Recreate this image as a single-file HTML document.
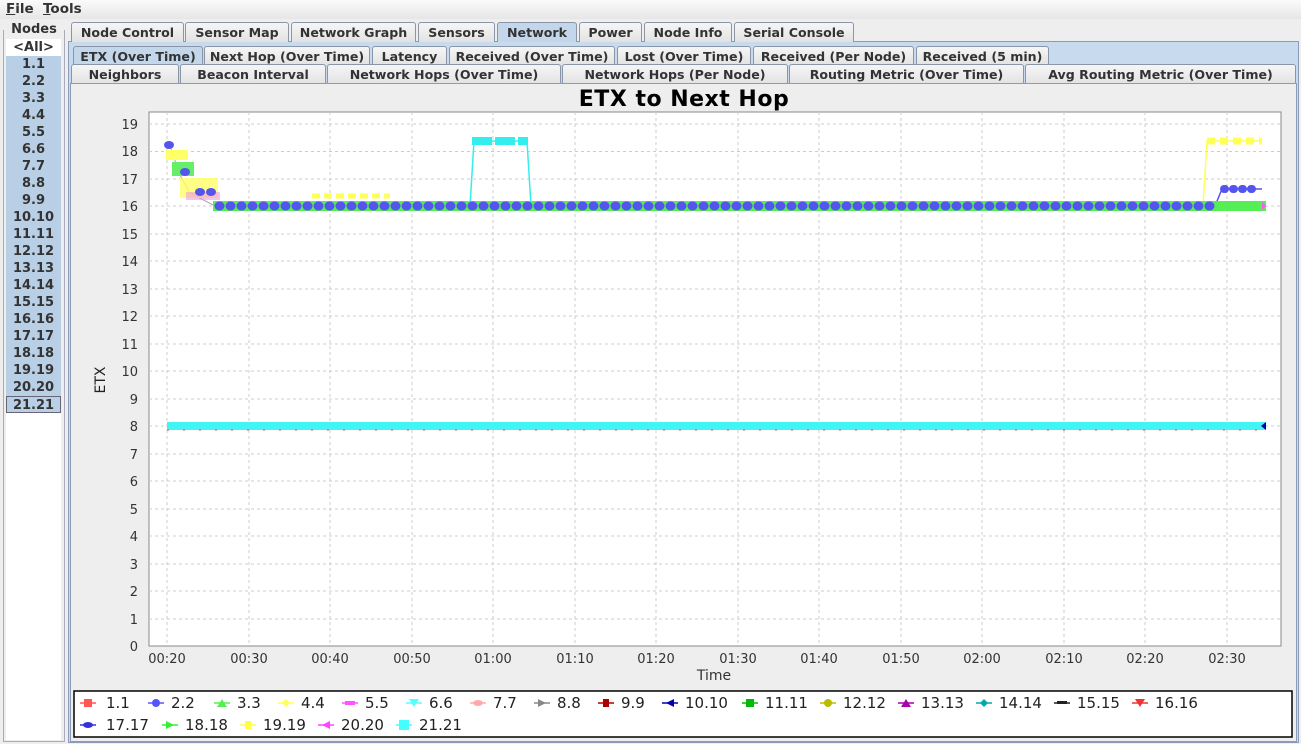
<!DOCTYPE html>
<html><head><meta charset="utf-8"><style>
*{margin:0;padding:0;box-sizing:border-box}
body{width:1301px;height:744px;background:#eeeeee;font-family:"DejaVu Sans","Liberation Sans",sans-serif;font-size:13px;color:#222;position:relative;overflow:hidden}
.abs{position:absolute}
.menu{left:0;top:0;width:1301px;height:19px;background:linear-gradient(#fbfbfb,#e6e6e6)}
.menu span{position:absolute;top:1px;font-size:13.5px;font-weight:bold;color:#333}
.tab{position:absolute;height:20px;border:1px solid #8a96a8;border-bottom:none;background:linear-gradient(#f6f6f6,#e2e2e2);text-align:center;font-weight:bold;font-size:12.6px;line-height:19px;color:#333;border-radius:3px 3px 0 0;white-space:nowrap;overflow:hidden}
.sel{background:#c3d6ea}
.nodes div{height:17px;line-height:17px;text-align:center;font-weight:bold;color:#333}
</style></head><body>
<div class="abs menu"><span style="left:6px"><u>F</u>ile</span><span style="left:43px"><u>T</u>ools</span></div>
<div class="abs" style="left:3px;top:30px;width:62px;height:712px;border:1px solid #aab;border-top:none"></div>
<div class="abs" style="left:6px;top:22px;width:56px;text-align:center;font-weight:bold;background:#eee;color:#333">Nodes</div>
<div class="abs nodes" style="left:6px;top:39px;width:55px;background:#fff;height:701px">
<div>&lt;All&gt;</div>
<div style="background:#b8cfe6">1.1</div><div style="background:#b8cfe6">2.2</div><div style="background:#b8cfe6">3.3</div><div style="background:#b8cfe6">4.4</div><div style="background:#b8cfe6">5.5</div><div style="background:#b8cfe6">6.6</div><div style="background:#b8cfe6">7.7</div><div style="background:#b8cfe6">8.8</div><div style="background:#b8cfe6">9.9</div><div style="background:#b8cfe6">10.10</div><div style="background:#b8cfe6">11.11</div><div style="background:#b8cfe6">12.12</div><div style="background:#b8cfe6">13.13</div><div style="background:#b8cfe6">14.14</div><div style="background:#b8cfe6">15.15</div><div style="background:#b8cfe6">16.16</div><div style="background:#b8cfe6">17.17</div><div style="background:#b8cfe6">18.18</div><div style="background:#b8cfe6">19.19</div><div style="background:#b8cfe6">20.20</div><div style="background:#b8cfe6;border:1px solid #667">21.21</div>
</div>
<div class="abs" style="left:68px;top:41px;width:1231px;height:702px;background:#c8dbee;border:1px solid #8a9cb8"></div>
<div class="tab" style="left:71px;top:22px;width:113px">Node Control</div>
<div class="tab" style="left:185px;top:22px;width:104px">Sensor Map</div>
<div class="tab" style="left:291px;top:22px;width:125px">Network Graph</div>
<div class="tab" style="left:418px;top:22px;width:77px">Sensors</div>
<div class="tab sel" style="left:497px;top:22px;width:80px">Network</div>
<div class="tab" style="left:579px;top:22px;width:63px">Power</div>
<div class="tab" style="left:644px;top:22px;width:88px">Node Info</div>
<div class="tab" style="left:734px;top:22px;width:120px">Serial Console</div>
<div class="tab sel" style="left:73px;top:46px;width:130px;height:19px">ETX (Over Time)</div>
<div class="tab" style="left:204px;top:46px;width:166px;height:19px">Next Hop (Over Time)</div>
<div class="tab" style="left:372px;top:46px;width:75px;height:19px">Latency</div>
<div class="tab" style="left:449px;top:46px;width:166px;height:19px">Received (Over Time)</div>
<div class="tab" style="left:617px;top:46px;width:134px;height:19px">Lost (Over Time)</div>
<div class="tab" style="left:753px;top:46px;width:161px;height:19px">Received (Per Node)</div>
<div class="tab" style="left:916px;top:46px;width:133px;height:19px">Received (5 min)</div>
<div class="tab" style="left:71px;top:64px;width:108px;height:20px">Neighbors</div>
<div class="tab" style="left:180px;top:64px;width:146px;height:20px">Beacon Interval</div>
<div class="tab" style="left:327px;top:64px;width:234px;height:20px">Network Hops (Over Time)</div>
<div class="tab" style="left:562px;top:64px;width:226px;height:20px">Network Hops (Per Node)</div>
<div class="tab" style="left:789px;top:64px;width:235px;height:20px">Routing Metric (Over Time)</div>
<div class="tab" style="left:1025px;top:64px;width:271px;height:20px">Avg Routing Metric (Over Time)</div>
<div class="abs" style="left:70px;top:83px;width:1227px;height:659px;background:#eeeeee;border:1px solid #8a9cb8"></div>
<svg class="abs" style="left:0;top:0" width="1301" height="744" font-family="DejaVu Sans,Liberation Sans,sans-serif">
<text x="684" y="106" text-anchor="middle" font-size="22" font-weight="bold" fill="#000" letter-spacing="0.5">ETX to Next Hop</text>
<rect x="149" y="112" width="1132" height="534" fill="#fff" stroke="#888"/>
<g stroke="#ccc" stroke-dasharray="3,3" stroke-width="1">
<path d="M149 124H1281M149 151.5H1281M149 179H1281M149 206H1281M149 234H1281M149 261H1281M149 289H1281M149 316H1281M149 344H1281M149 371H1281M149 399H1281M149 426H1281M149 454H1281M149 481H1281M149 509H1281M149 536H1281M149 564H1281M149 591H1281M149 619H1281"/>
<path d="M167 112V646M249 112V646M330 112V646M412 112V646M493 112V646M575 112V646M656 112V646M738 112V646M819 112V646M901 112V646M982 112V646M1064 112V646M1145 112V646M1227 112V646"/>
</g>
<g font-size="13" fill="#333" text-anchor="end">
<text x="138" y="129">19</text><text x="138" y="156">18</text><text x="138" y="184">17</text><text x="138" y="211">16</text><text x="138" y="239">15</text><text x="138" y="266">14</text><text x="138" y="294">13</text><text x="138" y="321">12</text><text x="138" y="349">11</text><text x="138" y="376">10</text><text x="138" y="404">9</text><text x="138" y="431">8</text><text x="138" y="459">7</text><text x="138" y="486">6</text><text x="138" y="514">5</text><text x="138" y="541">4</text><text x="138" y="569">3</text><text x="138" y="596">2</text><text x="138" y="624">1</text><text x="138" y="651">0</text>
</g>
<g font-size="13" fill="#333" text-anchor="middle">
<text x="167" y="663">00:20</text><text x="249" y="663">00:30</text><text x="330" y="663">00:40</text><text x="412" y="663">00:50</text><text x="493" y="663">01:00</text><text x="575" y="663">01:10</text><text x="656" y="663">01:20</text><text x="738" y="663">01:30</text><text x="819" y="663">01:40</text><text x="901" y="663">01:50</text><text x="982" y="663">02:00</text><text x="1064" y="663">02:10</text><text x="1145" y="663">02:20</text><text x="1227" y="663">02:30</text>
<text x="714" y="680" font-size="14">Time</text>
</g>
<text x="105" y="380" font-size="14" fill="#222" text-anchor="middle" transform="rotate(-90 105 380)">ETX</text>
<path d="M170 146L180 175L190 193L215 206" stroke="#aaa" fill="none"/>
<rect x="166" y="150" width="22" height="10" fill="#ffff66"/><rect x="172" y="162" width="22" height="14" fill="#66ee66"/><rect x="180" y="178" width="38" height="20" fill="#ffff66" opacity=".8"/>
<rect x="186" y="192" width="34" height="8" fill="#ee88ee" opacity=".5"/>
<ellipse cx="169" cy="145" rx="5" ry="4" fill="#5555ee"/><ellipse cx="185" cy="172" rx="5" ry="4" fill="#5555ee"/>
<ellipse cx="200" cy="192" rx="5" ry="4" fill="#5555ee"/><ellipse cx="211" cy="192" rx="5" ry="4" fill="#5555ee"/>
<path d="M312 196H390" stroke="#ffff55" stroke-width="5" stroke-dasharray="8,4"/>
<path d="M470 206L474 141H527L531 206" stroke="#33eeee" fill="none" stroke-width="1.5"/>
<path d="M472 141H528" stroke="#33eeee" stroke-width="8" stroke-dasharray="20,3"/>
<path d="M1203 206L1207 141H1262" stroke="#ffff55" fill="none" stroke-width="1.5"/>
<path d="M1207 141H1262" stroke="#ffff55" stroke-width="7" stroke-dasharray="8,5"/>
<path d="M1215 206L1222 189H1262" stroke="#5555ee" fill="none" stroke-width="1.5"/>
<path d="M1224 189H1260" stroke="#5555ee" stroke-width="8" stroke-dasharray="1,8" stroke-linecap="round"/>
<path d="M213 206H1266" stroke="#55ee55" stroke-width="10"/>
<path d="M219 206H1220" stroke="#5555ee" stroke-width="9" stroke-dasharray="1,10" stroke-linecap="round"/>
<path d="M1262 202L1266 206L1262 210Z" fill="#ff55ff"/>
<path d="M167 426H1266" stroke="#44f4f4" stroke-width="8"/>
<path d="M167 430H1266" stroke="#cc4444" stroke-width="1.5" stroke-dasharray="2,14" opacity=".6"/>
<path d="M1266 422L1261 426L1266 430Z" fill="#0000aa"/>
<rect x="74" y="691" width="1218" height="46" fill="#fff" stroke="#000" stroke-width="1.5"/>
<g font-size="15" fill="#222">
<g transform="translate(80,703)">
<path d="M0 0H16" stroke="#ff5555" stroke-width="1.5"/><rect x="4" y="-4" width="8" height="8" fill="#ff5555"/><text x="26" y="5">1.1</text>
<g transform="translate(68,0)"><path d="M0 0H16" stroke="#5555ff" stroke-width="1.5"/><circle cx="8" cy="0" r="4" fill="#5555ff"/><text x="23" y="5">2.2</text></g>
<g transform="translate(134,0)"><path d="M0 0H16" stroke="#55ee55" stroke-width="1.5"/><path d="M3 4L8 -4L13 4Z" fill="#55ee55"/><text x="23" y="5">3.3</text></g>
<g transform="translate(198,0)"><path d="M0 0H16" stroke="#ffff55" stroke-width="1.5"/><path d="M8 -4L12 0L8 4L4 0Z" fill="#ffff55"/><text x="23" y="5">4.4</text></g>
<g transform="translate(262,0)"><path d="M0 0H16" stroke="#ff55ff" stroke-width="1.5"/><rect x="3" y="-2" width="10" height="4" fill="#ff55ff"/><text x="23" y="5">5.5</text></g>
<g transform="translate(326,0)"><path d="M0 0H16" stroke="#55ffff" stroke-width="1.5"/><path d="M3 -4L13 -4L8 4Z" fill="#55ffff"/><text x="23" y="5">6.6</text></g>
<g transform="translate(390,0)"><path d="M0 0H16" stroke="#ffaaaa" stroke-width="1.5"/><ellipse cx="8" cy="0" rx="5" ry="3" fill="#ffaaaa"/><text x="23" y="5">7.7</text></g>
<g transform="translate(454,0)"><path d="M0 0H16" stroke="#888" stroke-width="1.5"/><path d="M4 -4L12 0L4 4Z" fill="#888"/><text x="23" y="5">8.8</text></g>
<g transform="translate(518,0)"><path d="M0 0H16" stroke="#aa0000" stroke-width="1.5"/><rect x="5" y="-4" width="6" height="8" fill="#aa0000"/><text x="23" y="5">9.9</text></g>
<g transform="translate(582,0)"><path d="M0 0H16" stroke="#0000aa" stroke-width="1.5"/><path d="M12 -4L4 0L12 4Z" fill="#0000aa"/><text x="23" y="5">10.10</text></g>
<g transform="translate(662,0)"><path d="M0 0H16" stroke="#00bb00" stroke-width="1.5"/><rect x="4" y="-4" width="8" height="8" fill="#00bb00"/><text x="23" y="5">11.11</text></g>
<g transform="translate(740,0)"><path d="M0 0H16" stroke="#bbbb00" stroke-width="1.5"/><circle cx="8" cy="0" r="4" fill="#bbbb00"/><text x="23" y="5">12.12</text></g>
<g transform="translate(818,0)"><path d="M0 0H16" stroke="#aa00aa" stroke-width="1.5"/><path d="M3 4L8 -4L13 4Z" fill="#aa00aa"/><text x="23" y="5">13.13</text></g>
<g transform="translate(896,0)"><path d="M0 0H16" stroke="#00aaaa" stroke-width="1.5"/><path d="M8 -4L12 0L8 4L4 0Z" fill="#00aaaa"/><text x="23" y="5">14.14</text></g>
<g transform="translate(974,0)"><path d="M0 0H16" stroke="#222" stroke-width="1.5"/><rect x="3" y="-2" width="10" height="3" fill="#222"/><text x="23" y="5">15.15</text></g>
<g transform="translate(1052,0)"><path d="M0 0H16" stroke="#ee3333" stroke-width="1.5"/><path d="M3 -4L13 -4L8 4Z" fill="#ee3333"/><text x="23" y="5">16.16</text></g>
</g>
<g transform="translate(80,725)">
<path d="M0 0H16" stroke="#3333dd" stroke-width="1.5"/><ellipse cx="8" cy="0" rx="5" ry="3" fill="#3333dd"/><text x="26" y="5">17.17</text>
<g transform="translate(82,0)"><path d="M0 0H16" stroke="#33ee33" stroke-width="1.5"/><path d="M4 -4L12 0L4 4Z" fill="#33ee33"/><text x="23" y="5">18.18</text></g>
<g transform="translate(160,0)"><path d="M0 0H16" stroke="#ffff44" stroke-width="1.5"/><rect x="5" y="-4" width="6" height="8" fill="#ffff44"/><text x="23" y="5">19.19</text></g>
<g transform="translate(238,0)"><path d="M0 0H16" stroke="#ff44ff" stroke-width="1.5"/><path d="M12 -4L4 0L12 4Z" fill="#ff44ff"/><text x="23" y="5">20.20</text></g>
<g transform="translate(316,0)"><path d="M0 0H16" stroke="#44ffff" stroke-width="1.5"/><rect x="3" y="-5" width="10" height="10" fill="#44ffff"/><text x="23" y="5">21.21</text></g>
</g>
</g>
</svg>
</body></html>
